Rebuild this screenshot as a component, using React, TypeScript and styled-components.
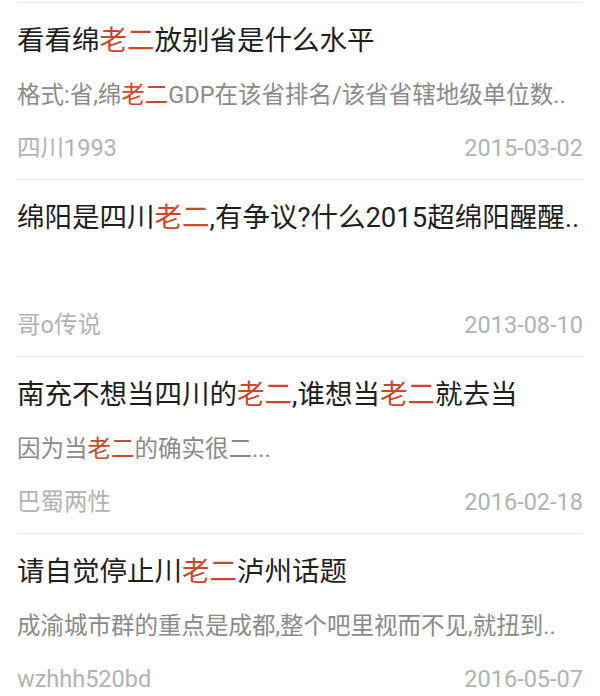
import React from "react";
import styled, { createGlobalStyle } from "styled-components";

interface Post {
  title: string;
  summary?: string;
  author: string;
  date: string;
}

const KEYWORD = "老二";

const posts: Post[] = [
  {
    title: "看看绵老二放别省是什么水平",
    summary: "格式:省,绵老二GDP在该省排名/该省省辖地级单位数..",
    author: "四川1993",
    date: "2015-03-02",
  },
  {
    title: "绵阳是四川老二,有争议?什么2015超绵阳醒醒..",
    author: "哥o传说",
    date: "2013-08-10",
  },
  {
    title: "南充不想当四川的老二,谁想当老二就去当",
    summary: "因为当老二的确实很二...",
    author: "巴蜀两性",
    date: "2016-02-18",
  },
  {
    title: "请自觉停止川老二泸州话题",
    summary: "成渝城市群的重点是成都,整个吧里视而不见,就扭到..",
    author: "wzhhh520bd",
    date: "2016-05-07",
  },
];

const GlobalStyle = createGlobalStyle`
  html, body {
    margin: 0;
    padding: 0;
    background: #fff;
    overflow: hidden;
  }
  body {
    font-family: "Roboto", "Noto Sans CJK SC", sans-serif;
  }
`;

const List = styled.div`
  padding-top: 2px;
`;

const Item = styled.div`
  margin: 0 17px;
  padding: 21px 0 16px 0;
  border-top: 1px solid #ebebeb;
`;

const Title = styled.div`
  font-size: 27.5px;
  line-height: 34px;
  color: #1e1e1e;
  white-space: nowrap;
  overflow: hidden;
`;

const Summary = styled.div`
  margin-top: 22px;
  height: 30px;
  font-size: 23.5px;
  line-height: 30px;
  color: #8a8a8a;
  white-space: nowrap;
  overflow: hidden;
`;

const Meta = styled.div`
  margin-top: 23px;
  display: flex;
  justify-content: space-between;
  align-items: center;
  font-size: 23.5px;
  line-height: 30px;
  color: #b2b2b2;
`;

const Mark = styled.span`
  color: #c9472c;
`;

const Highlight: React.FC<{ text: string }> = ({ text }) => {
  const parts = text.split(KEYWORD);
  return (
    <>
      {parts.map((part, index) => (
        <React.Fragment key={index}>
          {part}
          {index < parts.length - 1 && <Mark>{KEYWORD}</Mark>}
        </React.Fragment>
      ))}
    </>
  );
};

const App: React.FC = () => {
  return (
    <>
      <GlobalStyle />
      <List>
        {posts.map((post, index) => (
          <Item key={index}>
            <Title>
              <Highlight text={post.title} />
            </Title>
            <Summary>{post.summary && <Highlight text={post.summary} />}</Summary>
            <Meta>
              <span>{post.author}</span>
              <span>{post.date}</span>
            </Meta>
          </Item>
        ))}
      </List>
    </>
  );
};

export default App;
